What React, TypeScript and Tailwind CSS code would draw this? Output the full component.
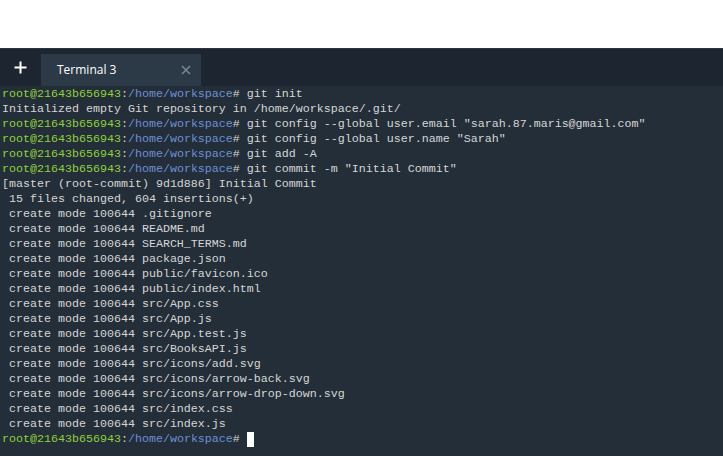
const prompt = (cmd?: string, cursor?: boolean) => (
  <div className="whitespace-pre">
    <span className="text-[#8fd13c]">root@21643b656943</span>
    <span className="text-[#d6d6d6]">:</span>
    <span className="text-[#6e90d4]">/home/workspace</span>
    <span className="text-[#d6d6d6]"># {cmd}</span>
    {cursor && <span className="inline-block w-[7px] h-[15px] bg-white align-top" />}
  </div>
);

const output = [
  "[master (root-commit) 9d1d886] Initial Commit",
  " 15 files changed, 604 insertions(+)",
  " create mode 100644 .gitignore",
  " create mode 100644 README.md",
  " create mode 100644 SEARCH_TERMS.md",
  " create mode 100644 package.json",
  " create mode 100644 public/favicon.ico",
  " create mode 100644 public/index.html",
  " create mode 100644 src/App.css",
  " create mode 100644 src/App.js",
  " create mode 100644 src/App.test.js",
  " create mode 100644 src/BooksAPI.js",
  " create mode 100644 src/icons/add.svg",
  " create mode 100644 src/icons/arrow-back.svg",
  " create mode 100644 src/icons/arrow-drop-down.svg",
  " create mode 100644 src/index.css",
  " create mode 100644 src/index.js",
];

export default function App() {
  return (
    <div className="w-[723px] h-[456px] bg-white flex flex-col overflow-hidden">
      <div className="h-[48px] bg-white" />
      <div className="h-[38px] bg-[#1d2630] border-t border-[#2a3440] flex items-end">
        <button className="w-[41px] h-full flex items-center justify-center text-white">
          <svg width="13" height="13" viewBox="0 0 13 13">
            <path d="M6.5 0.5v12M0.5 6.5h12" stroke="currentColor" strokeWidth="2" />
          </svg>
        </button>
        <div className="w-[160px] h-[32px] bg-[#2c3a48] flex items-center pl-[16px] pr-[10px] justify-between">
          <span className="text-white text-[12px] font-['Open_Sans',sans-serif]">Terminal 3</span>
          <svg width="10" height="10" viewBox="0 0 10 10" className="text-[#7b8794]">
            <path d="M1 1l8 8M9 1l-8 8" stroke="currentColor" strokeWidth="1.5" />
          </svg>
        </div>
      </div>
      <div className="flex-1 bg-[#232e38] pl-[2px] pt-[1px] font-['Liberation_Mono',monospace] text-[11.67px] leading-[15px] text-[#d6d6d6]">
        {prompt("git init")}
        <div className="whitespace-pre">Initialized empty Git repository in /home/workspace/.git/</div>
        {prompt('git config --global user.email "sarah.87.maris@gmail.com"')}
        {prompt('git config --global user.name "Sarah"')}
        {prompt("git add -A")}
        {prompt('git commit -m "Initial Commit"')}
        {output.map((l, i) => (
          <div key={i} className="whitespace-pre">{l}</div>
        ))}
        {prompt("", true)}
      </div>
    </div>
  );
}
